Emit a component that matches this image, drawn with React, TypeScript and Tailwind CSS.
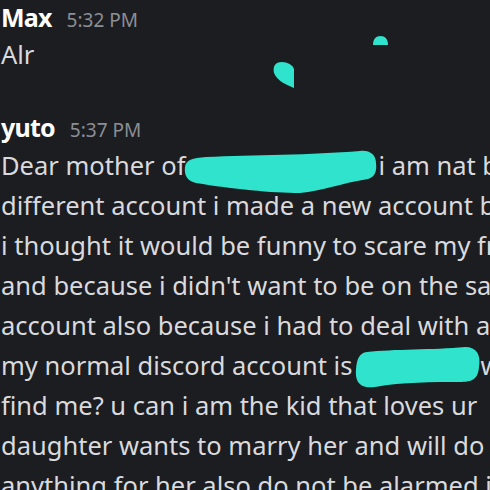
import React from 'react';

const teal = '#30e3cc';

// blob drawn over the redacted name in the first line
const BlobOne = () => (
  <svg width="196" height="52" viewBox="0 0 196 52" className="absolute left-[-3px] top-0">
    <path
      d="M3 22 C4 15 10 13 24 12 C70 10 130 10 178 6 C188 5 194 10 194 18 C195 26 193 32 186 34 C160 38 140 46 118 48 C90 48 50 44 14 38 C5 36 2 30 3 22 Z"
      fill={teal}
    />
  </svg>
);

const BlobTwo = () => (
  <svg width="128" height="48" viewBox="0 0 128 48" className="absolute left-[1px] top-0">
    <path
      d="M14 7 C40 4 80 5 112 2 C124 2 128 10 126 22 C125 34 120 37 106 37 C80 37 50 37 22 42 C6 44 2 36 3 24 C4 14 6 8 14 7 Z"
      fill={teal}
    />
  </svg>
);

const lines: React.ReactNode[] = [
  <>
    Dear mother of<span className="relative inline-block w-[193px] align-top h-[40px]"><BlobOne /></span>i am nat b
  </>,
  'different account i made a new account b',
  'i thought it would be funny to scare my fr',
  "and because i didn't want to be on the sar",
  'account also because i had to deal with a',
  <>
    my normal discord account is<span className="relative inline-block w-[128px] align-top h-[40px]"><BlobTwo /></span>w
  </>,
  'find me? u can i am the kid that loves ur',
  'daughter wants to marry her and will do',
  'anything for her also do not be alarmed i',
];

function Header({ name, time }: { name: string; time: string }) {
  return (
    <div className="flex items-baseline gap-[15px] h-[30px] leading-[30px]">
      <span className="text-[25px] font-bold tracking-[-0.8px] text-white">{name}</span>
      <span className="text-[19px] text-[#8b8e94]">{time}</span>
    </div>
  );
}

export default function App() {
  return (
    <div className="relative w-[490px] h-[490px] overflow-hidden bg-[#1c1d21] text-[#d9dadd] font-['Noto_Sans',sans-serif]">
      {/* stray redaction marks */}
      <svg width="22" height="28" viewBox="0 0 22 28" className="absolute left-[273px] top-[61px]">
        <path d="M4 2 C10 -1 20 3 21 8 L21 27 C14 24 4 20 1 12 C0 7 1 4 4 2 Z" fill={teal} />
      </svg>
      <svg width="17" height="9" viewBox="0 0 17 9" className="absolute left-[372px] top-[36px]">
        <path d="M1 9 C1 3 4 0 8.5 0 C13 0 16 3 16 9 Z" fill={teal} />
      </svg>

      <div className="pt-[2px] pl-[1px]">
        <Header name="Max" time="5:32 PM" />
        <div className="mt-[2px] text-[25.5px] leading-[40px]">Alr</div>

        <div className="mt-[38px]">
          <Header name="yuto" time="5:37 PM" />
        </div>
        <div className="mt-[3px] text-[25.5px] leading-[40px]">
          {lines.map((l, i) => (
            <div key={i} className="whitespace-nowrap h-[40px]">
              {l}
            </div>
          ))}
        </div>
      </div>
    </div>
  );
}
